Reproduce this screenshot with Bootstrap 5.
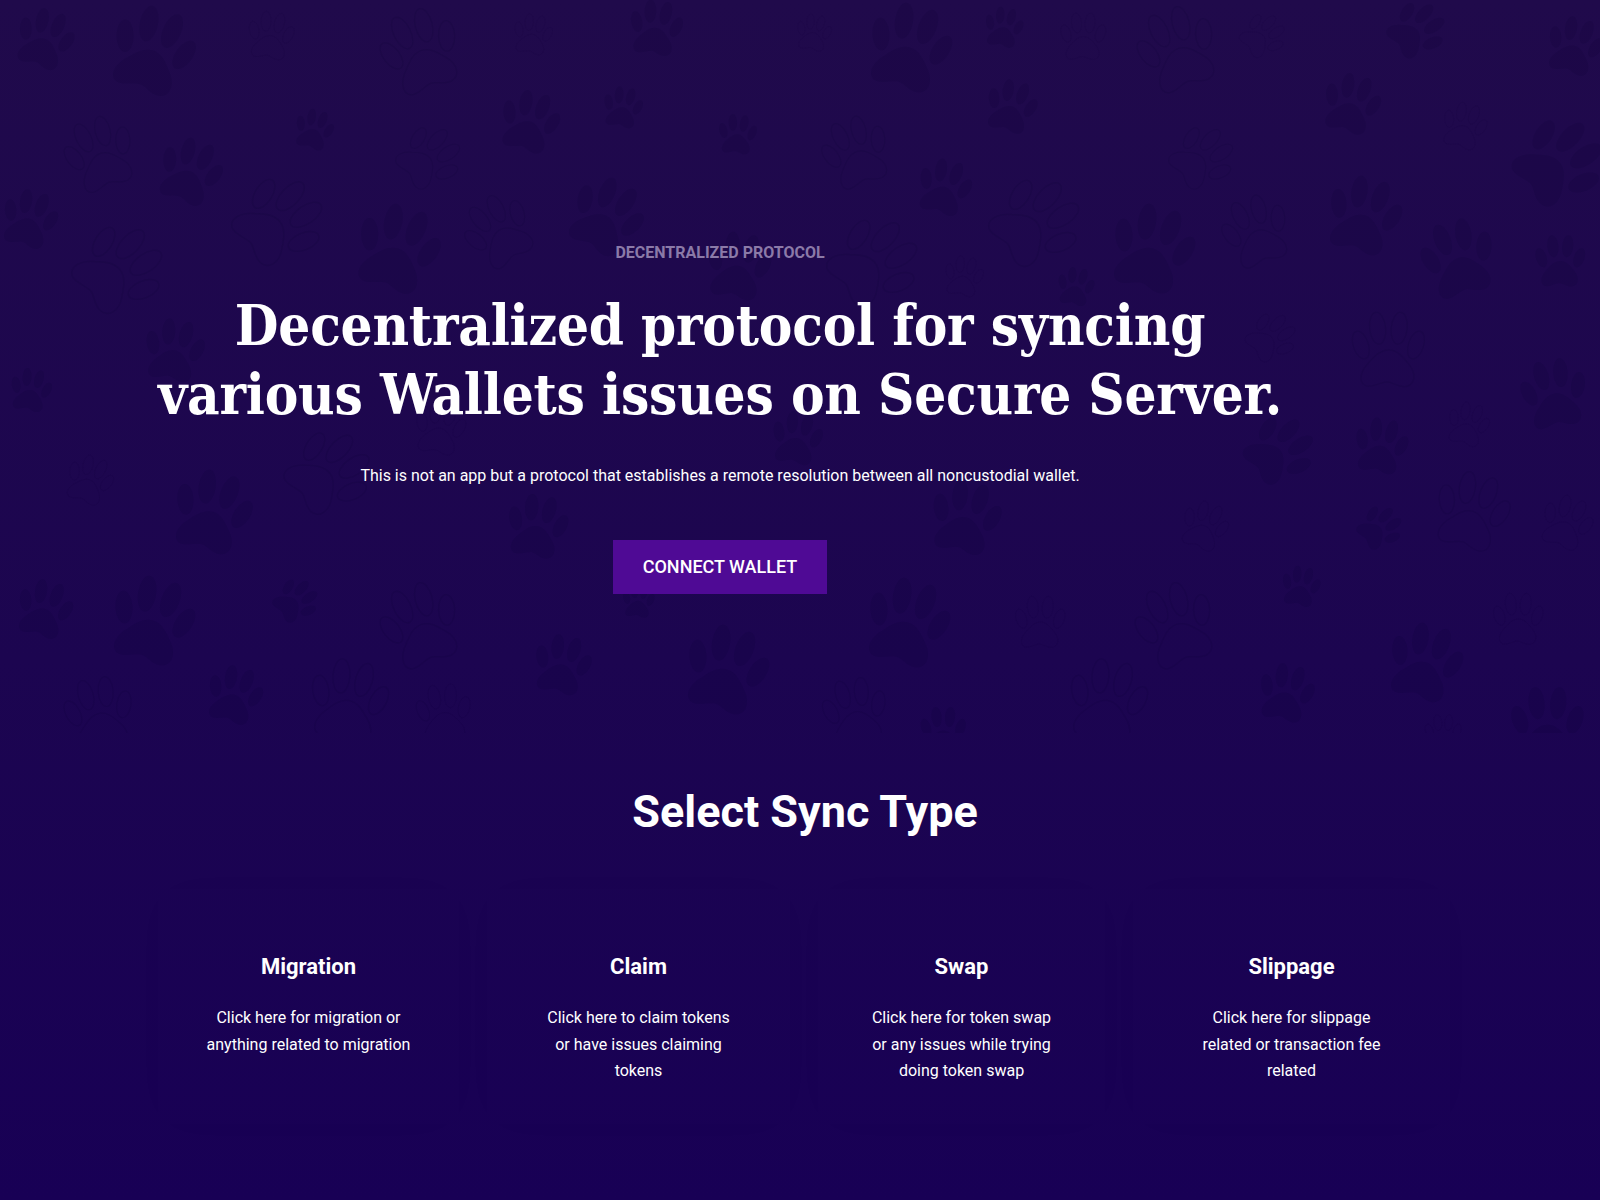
<!DOCTYPE html>
<html lang="en">
<head>
<meta charset="utf-8">
<title>Decentralized protocol</title>
<link href="https://cdn.jsdelivr.net/npm/bootstrap@5.3.0/dist/css/bootstrap.min.css" rel="stylesheet">
<style>
html,body{height:100%}
body{margin:0;min-height:1200px;overflow:hidden;background:linear-gradient(180deg,#200a4b 0%,#1c0550 55%,#180055 100%);font-family:Roboto,"Liberation Sans",sans-serif;color:#fff}
.hero-zone{height:733px;padding-top:241px}
.paw-layer{top:0;left:0;width:100%;height:733px}
.pf{fill:#0a0030;fill-opacity:.125}
.po{fill:none;stroke:#0a0030;stroke-opacity:.11;stroke-width:1.5}
.po *{vector-effect:non-scaling-stroke}
.hero-box{width:1280px;margin-left:80px}
.eyebrow{font-size:16px;font-weight:700;line-height:24px;color:#8b7aa8;margin-bottom:26px}
.hero-title{font-family:"DejaVu Serif","Liberation Serif",serif;font-stretch:condensed;font-weight:700;font-size:56px;letter-spacing:-.22px;line-height:69px;margin-bottom:35px}
.hero-text{font-size:16px;line-height:24px;margin-bottom:52px}
.cta{display:inline-block;width:214px;height:54px;line-height:54px;padding:0;border:0;border-radius:0;background:#4f0a95;color:#fff;font-size:18px;font-weight:500;text-transform:uppercase}
.cta:hover{background:#4f0a95;color:#fff}
.sync-title{font-size:45px;font-weight:700;line-height:53px;margin:0;padding:52px 0 0 10px;width:1600px;text-align:center}
.sync-grid{display:grid;grid-template-columns:329px 331px 315px 345px;margin-left:144px;margin-top:51px}
.sync-card{margin:0 14px;height:235px;padding-top:65px;box-shadow:0 0 50px rgba(0,0,0,.012)}
.sync-name{font-size:22px;font-weight:700;line-height:26px;margin-bottom:25px}
.sync-copy{font-size:16px;line-height:26.5px;margin:0}
</style>
</head>
<body>
<section class="hero-zone position-relative">
<svg class="paw-layer position-absolute" aria-hidden="true" viewBox="0 0 1600 733">
<defs>
<g id="p">
<ellipse cx="-34" cy="-15" rx="9.5" ry="18" transform="rotate(-18 -34 -15)"/>
<ellipse cx="-13" cy="-36" rx="10" ry="20" transform="rotate(-6 -13 -36)"/>
<ellipse cx="14" cy="-36" rx="10" ry="20" transform="rotate(6 14 -36)"/>
<ellipse cx="35" cy="-15" rx="9.5" ry="18" transform="rotate(18 35 -15)"/>
<path d="M1-9C11-9 18-1 26 9 36 21 34 35 22 37 12 38 5 31-1 31-9 31-20 39-28 36-38 31-34 17-24 7-16-2-9-9 1-9Z"/>
</g>
</defs>
<use href="#p" class="pf" transform="translate(43 44) rotate(18) scale(.62)"/>
<use href="#p" class="pf" transform="translate(150 58) rotate(18) scale(.9)"/>
<use href="#p" class="po" transform="translate(270 40) rotate(8) scale(.5)"/>
<use href="#p" class="po" transform="translate(423 58) rotate(-20) scale(.85)"/>
<use href="#p" class="po" transform="translate(532 38) rotate(10) scale(.42)"/>
<use href="#p" class="pf" transform="translate(655 33) rotate(8) scale(.58)"/>
<use href="#p" class="pf" transform="translate(528 127) rotate(15) scale(.64)"/>
<use href="#p" class="pf" transform="translate(622 111) rotate(10) scale(.43)"/>
<use href="#p" class="pf" transform="translate(737 138) rotate(5) scale(.42)"/>
<use href="#p" class="pf" transform="translate(313 133) rotate(15) scale(.42)"/>
<use href="#p" class="po" transform="translate(102 160) rotate(-20) scale(.75)"/>
<use href="#p" class="po" transform="translate(425 161) rotate(50) scale(.64)"/>
<use href="#p" class="pf" transform="translate(188 177) rotate(20) scale(.68)"/>
<use href="#p" class="pf" transform="translate(28 224) rotate(15) scale(.6)"/>
<use href="#p" class="po" transform="translate(273 226) rotate(50) scale(.9)"/>
<use href="#p" class="pf" transform="translate(395 256) rotate(17) scale(.9)"/>
<use href="#p" class="po" transform="translate(502 236) rotate(-33) scale(.72)"/>
<use href="#p" class="pf" transform="translate(603 222) rotate(28) scale(.78)"/>
<use href="#p" class="po" transform="translate(113 274) rotate(50) scale(.9)"/>
<use href="#p" class="pf" transform="translate(737 272) rotate(10) scale(.7)"/>
<use href="#p" class="pf" transform="translate(173 356) rotate(10) scale(.65)"/>
<use href="#p" class="pf" transform="translate(30 394) rotate(10) scale(.45)"/>
<use href="#p" class="po" transform="translate(88 484) rotate(20) scale(.5)"/>
<use href="#p" class="po" transform="translate(323 477) rotate(50) scale(.85)"/>
<use href="#p" class="po" transform="translate(439 433) rotate(10) scale(.55)"/>
<use href="#p" class="pf" transform="translate(210 519) rotate(15) scale(.85)"/>
<use href="#p" class="pf" transform="translate(536 532) rotate(10) scale(.66)"/>
<use href="#p" class="po" transform="translate(813 36) rotate(10) scale(.38)"/>
<use href="#p" class="pf" transform="translate(907 55) rotate(15) scale(.9)"/>
<use href="#p" class="pf" transform="translate(1003 31) rotate(10) scale(.42)"/>
<use href="#p" class="po" transform="translate(1083 41) rotate(0) scale(.5)"/>
<use href="#p" class="po" transform="translate(1180 56) rotate(-20) scale(.85)"/>
<use href="#p" class="po" transform="translate(1260 38) rotate(50) scale(.45)"/>
<use href="#p" class="pf" transform="translate(1413 33) rotate(50) scale(.58)"/>
<use href="#p" class="pf" transform="translate(1573 51) rotate(15) scale(.6)"/>
<use href="#p" class="pf" transform="translate(1010 111) rotate(15) scale(.55)"/>
<use href="#p" class="pf" transform="translate(1350 109) rotate(15) scale(.62)"/>
<use href="#p" class="po" transform="translate(1463 130) rotate(15) scale(.48)"/>
<use href="#p" class="po" transform="translate(858 158) rotate(-20) scale(.72)"/>
<use href="#p" class="po" transform="translate(1198 161) rotate(50) scale(.64)"/>
<use href="#p" class="pf" transform="translate(1553 167) rotate(50) scale(.9)"/>
<use href="#p" class="pf" transform="translate(943 192) rotate(15) scale(.58)"/>
<use href="#p" class="po" transform="translate(1030 227) rotate(50) scale(.9)"/>
<use href="#p" class="pf" transform="translate(1362 222) rotate(15) scale(.8)"/>
<use href="#p" class="po" transform="translate(1258 237) rotate(-20) scale(.72)"/>
<use href="#p" class="pf" transform="translate(1150 256) rotate(15) scale(.9)"/>
<use href="#p" class="po" transform="translate(868 267) rotate(50) scale(.9)"/>
<use href="#p" class="pf" transform="translate(1460 265) rotate(-15) scale(.8)"/>
<use href="#p" class="pf" transform="translate(1560 266) rotate(0) scale(.55)"/>
<use href="#p" class="po" transform="translate(963 280) rotate(10) scale(.42)"/>
<use href="#p" class="pf" transform="translate(1075 290) rotate(10) scale(.4)"/>
<use href="#p" class="po" transform="translate(1268 340) rotate(50) scale(.5)"/>
<use href="#p" class="po" transform="translate(1388 357) rotate(0) scale(.8)"/>
<use href="#p" class="pf" transform="translate(1555 400) rotate(-10) scale(.72)"/>
<use href="#p" class="pf" transform="translate(1275 454) rotate(50) scale(.7)"/>
<use href="#p" class="pf" transform="translate(1380 451) rotate(10) scale(.58)"/>
<use href="#p" class="pf" transform="translate(796 443) rotate(10) scale(.55)"/>
<use href="#p" class="po" transform="translate(1467 428) rotate(15) scale(.45)"/>
<use href="#p" class="po" transform="translate(1470 518) rotate(15) scale(.8)"/>
<use href="#p" class="po" transform="translate(1565 527) rotate(20) scale(.55)"/>
<use href="#p" class="pf" transform="translate(1377 530) rotate(50) scale(.45)"/>
<use href="#p" class="po" transform="translate(1203 530) rotate(20) scale(.5)"/>
<use href="#p" class="pf" transform="translate(964 524) rotate(12) scale(.76)"/>
<use href="#p" class="pf" transform="translate(1300 590) rotate(10) scale(.42)"/>
<use href="#p" class="pf" transform="translate(43 614) rotate(15) scale(.6)"/>
<use href="#p" class="pf" transform="translate(150 628) rotate(15) scale(.9)"/>
<use href="#p" class="pf" transform="translate(293 603) rotate(50) scale(.45)"/>
<use href="#p" class="po" transform="translate(423 632) rotate(-20) scale(.85)"/>
<use href="#p" class="pf" transform="translate(638 604) rotate(5) scale(.35)"/>
<use href="#p" class="pf" transform="translate(905 630) rotate(15) scale(.9)"/>
<use href="#p" class="po" transform="translate(1178 632) rotate(-20) scale(.85)"/>
<use href="#p" class="po" transform="translate(1040 627) rotate(0) scale(.55)"/>
<use href="#p" class="po" transform="translate(1518 624) rotate(0) scale(.55)"/>
<use href="#p" class="pf" transform="translate(561 670) rotate(12) scale(.62)"/>
<use href="#p" class="pf" transform="translate(724 677) rotate(15) scale(.9)"/>
<use href="#p" class="pf" transform="translate(1423 669) rotate(15) scale(.8)"/>
<use href="#p" class="pf" transform="translate(233 700) rotate(15) scale(.6)"/>
<use href="#p" class="pf" transform="translate(1285 698) rotate(12) scale(.6)"/>
<use href="#p" class="pf" transform="translate(943 735) rotate(0) scale(.5)"/>
<use href="#p" class="pf" transform="translate(1547 732) rotate(0) scale(.8)"/>
<use href="#p" class="po" transform="translate(100 720) rotate(-10) scale(.75)"/>
<use href="#p" class="po" transform="translate(347 708) rotate(10) scale(.85)"/>
<use href="#p" class="po" transform="translate(444 718) rotate(-5) scale(.6)"/>
<use href="#p" class="po" transform="translate(1106 708) rotate(10) scale(.85)"/>
<use href="#p" class="po" transform="translate(856 718) rotate(-10) scale(.7)"/>
<use href="#p" class="po" transform="translate(1443 737) rotate(0) scale(.4)"/>
</svg>
<div class="hero-box position-relative text-center">
<div class="eyebrow text-uppercase">Decentralized Protocol</div>
<h1 class="hero-title">Decentralized protocol for syncing<br>various Wallets issues on Secure Server.</h1>
<p class="hero-text">This is not an app but a protocol that establishes a remote resolution between all noncustodial wallet.</p>
<a href="#" class="btn cta">Connect Wallet</a>
</div>
</section>
<section>
<h2 class="sync-title">Select Sync Type</h2>
<div class="sync-grid text-center">
<div class="sync-card"><h3 class="sync-name">Migration</h3><p class="sync-copy">Click here for migration or<br>anything related to migration</p></div>
<div class="sync-card"><h3 class="sync-name">Claim</h3><p class="sync-copy">Click here to claim tokens<br>or have issues claiming<br>tokens</p></div>
<div class="sync-card"><h3 class="sync-name">Swap</h3><p class="sync-copy">Click here for token swap<br>or any issues while trying<br>doing token swap</p></div>
<div class="sync-card"><h3 class="sync-name">Slippage</h3><p class="sync-copy">Click here for slippage<br>related or transaction fee<br>related</p></div>
</div>
</section>
<script src="https://cdn.jsdelivr.net/npm/bootstrap@5.3.0/dist/js/bootstrap.bundle.min.js"></script>
</body>
</html>
